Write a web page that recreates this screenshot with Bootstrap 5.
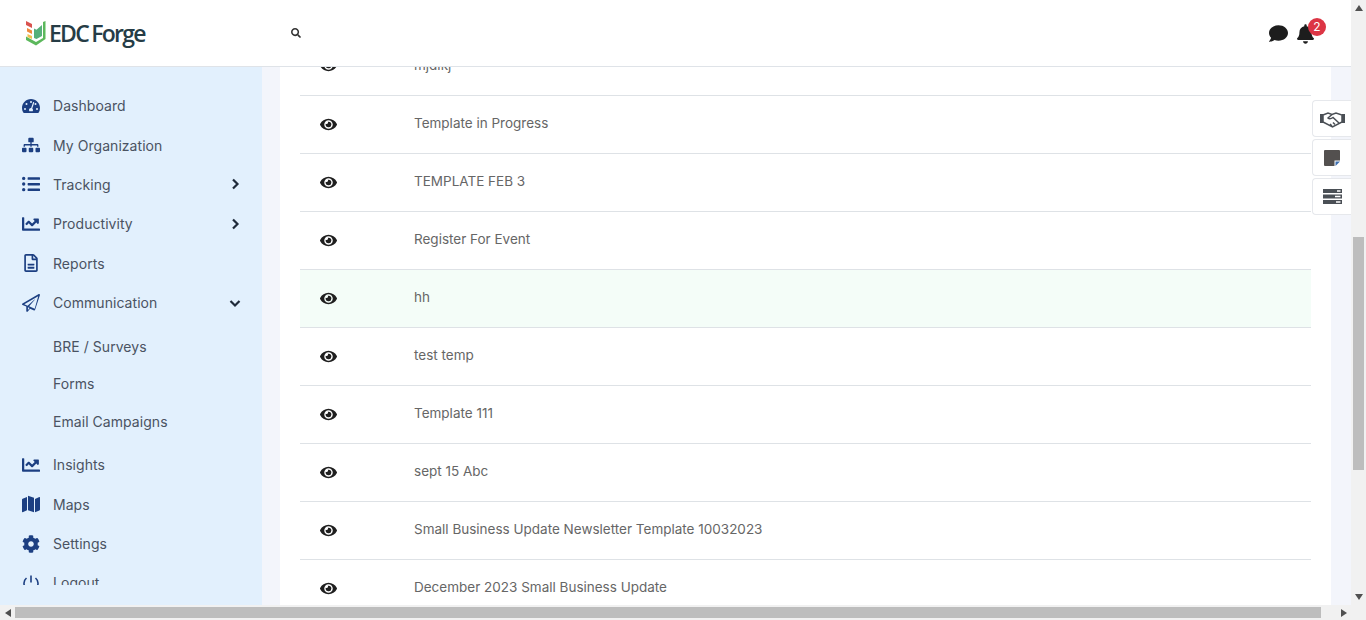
<!DOCTYPE html>
<html lang="en">
<head>
<meta charset="utf-8">
<title>EDC Forge</title>
<link href="https://cdn.jsdelivr.net/npm/bootstrap@5.3.0/dist/css/bootstrap.min.css" rel="stylesheet">
<style>
html,body{height:620px;overflow:hidden;}
body{font-family:Inter,"Open Sans","Liberation Sans",sans-serif;background:#f3f5fb;}
.frame{height:620px;width:1366px;}
.page-col{width:1351px;min-width:0;}
.topbar{height:67px;background:#fff;border-bottom:1px solid #dfe3e8;padding:0 37px 0 26px;flex:none;position:relative;z-index:2;}
.brand-mark{width:20px;height:26px;flex:none;}
.brand-word{font-family:"Open Sans","Liberation Sans",sans-serif;font-weight:600;font-size:23px;letter-spacing:-1.75px;color:#263c46;margin-left:3px;line-height:1;word-spacing:-1px;}
.search-ic{width:10px;height:10px;margin-left:146px;fill:#333;margin-top:-1px;}
.top-ic{fill:#1d1d1d;}
.bell-wrap{position:relative;width:17px;height:20px;margin-left:9px;margin-top:1px;}
.bell-count{position:absolute;left:11px;top:-6px;width:18px;height:18px;border-radius:50%;background:#dc3545;color:#fff;font-size:12px;line-height:18px;text-align:center;}
.workspace{flex:1;min-height:0;}
.side-panel{width:262px;background:#e2f0fd;flex:none;padding-top:19px;padding-bottom:20px;}
.side-list{height:499px;overflow:hidden;margin:0;padding:0;list-style:none;}
.side-item{height:39.4px;display:flex;align-items:center;padding-left:22px;padding-right:20px;color:#4a5362;font-size:14px;letter-spacing:.05px;}
.side-ic{width:18px;height:18px;fill:#1c3f82;margin-right:13px;flex:none;}
.side-chev{margin-left:auto;width:14px;height:14px;stroke:#1f2a3a;stroke-width:2.2;fill:none;}
.side-sub{list-style:none;margin:0;padding:5px 0 5px 0;}
.side-sub-item{height:37.6px;display:flex;align-items:center;padding-left:53px;color:#4a5362;font-size:14px;letter-spacing:.05px;}
.main-pad{flex:1;min-width:0;padding:0 20px 0 18px;overflow:hidden;}
.sheet{background:#fff;height:100%;padding:0 20px;overflow:hidden;}
.tmpl-table{margin-top:-30px;margin-bottom:0;width:100%;}
.tmpl-table td{height:58px;padding:0 0 2px;vertical-align:middle;color:#666;font-size:13.5px;border-bottom:1px solid #dee2e6;background:transparent;box-shadow:none;}
.tmpl-table tr.hl td{background:#f4fdf8;}
.eye-cell{width:114px;}
.eye-ic{width:17px;height:17px;fill:#1f1f1f;display:block;margin-left:20px;margin-top:2px;}
.float-stack{position:absolute;left:1312px;top:100px;width:39px;z-index:3;}
.float-btn{height:37px;margin-bottom:2px;background:#fff;border:1px solid #e6e8ec;border-right:0;border-radius:4px 0 0 4px;display:flex;align-items:center;justify-content:center;}
.hbar{height:15px;background:#f1f1f1;flex:none;}
.sb-arrow{width:15px;height:15px;flex:none;display:flex;align-items:center;justify-content:center;fill:#505050;}
.hthumb{width:1306px;height:11px;background:#bdbdbd;}
.vbar{width:15px;background:#f1f1f1;flex:none;height:620px;}
.vthumb{height:233px;width:11px;background:#bdbdbd;margin:222px auto 0;}
.v-spacer{flex:1;}
</style>
</head>
<body>
<div class="frame d-flex position-relative">
  <div class="page-col d-flex flex-column">
    <header class="topbar d-flex align-items-center">
      <svg class="brand-mark" viewBox="0 0 20 26"><path d="M0 1l6 3v4L0 5z" fill="#d9534f"/><path d="M1 8l5 2.400v3.600L1 11.500z" fill="#ee8a3c"/><path d="M1.500 14l4.500 2v3l-4.500-2z" fill="#f2c14e"/><path d="M0 16.500l10 5.500 7-4V2l2.500-1v18L10 25.500 0 20z" fill="#5cb85c"/><path d="M8 8.500l2.500 1.300V19L8 18z M10.500 9.800L16 5v11l-5.500 3z" fill="#56b07a"/></svg>
      <span class="brand-word">EDC Forge</span>
      <svg class="search-ic" viewBox="0 0 512 512"><path d="M505 442.700L405.300 343c-4.500-4.500-10.600-7-17-7H372c27.600-35.300 44-79.700 44-128C416 93.100 322.900 0 208 0S0 93.100 0 208s93.100 208 208 208c48.300 0 92.700-16.400 128-44v16.300c0 6.400 2.500 12.500 7 17l99.700 99.700c9.400 9.400 24.600 9.400 33.900 0l28.300-28.300c9.400-9.400 9.400-24.600.1-34zM208 336c-70.700 0-128-57.200-128-128 0-70.700 57.200-128 128-128 70.700 0 128 57.200 128 128 0 70.700-57.200 128-128 128z"/></svg>
      <div class="ms-auto d-flex align-items-center">
        <svg class="top-ic" width="19" height="19" viewBox="0 0 512 512"><path d="M256 32C114.600 32 0 125.100 0 240c0 49.600 21.400 95 57 130.700C44.500 421.100 2.700 466 2.200 466.500c-2.200 2.300-2.800 5.700-1.500 8.700S4.800 480 8 480c66.300 0 116-31.800 140.600-51.400 32.700 12.300 69 19.400 107.400 19.400 141.400 0 256-93.100 256-208S397.400 32 256 32z"/></svg>
        <div class="bell-wrap">
          <svg class="top-ic d-block" width="17" height="20" viewBox="0 0 448 512"><path d="M224 512c35.320 0 63.970-28.650 63.970-64H160.030c0 35.350 28.650 64 63.970 64zm215.390-149.710c-19.320-20.760-55.470-51.990-55.470-154.290 0-77.700-54.480-139.900-127.940-155.160V32c0-17.670-14.320-32-31.980-32s-31.980 14.330-31.980 32v20.840C118.560 68.100 64.080 130.300 64.080 208c0 102.300-36.150 133.530-55.470 154.290-6 6.450-8.660 14.160-8.610 21.710.11 16.400 12.980 32 32.100 32h383.800c19.120 0 32-15.600 32.100-32 .05-7.550-2.610-15.270-8.610-21.710z"/></svg>
          <span class="bell-count">2</span>
        </div>
      </div>
    </header>
    <div class="workspace d-flex">
      <nav class="side-panel">
        <ul class="side-list">
          <li class="side-item"><svg class="side-ic" viewBox="0 0 576 512"><path d="M288 32C129 32 0 161 0 320c0 53 14 102 39 145 5 9 15 15 26 15h446c11 0 21-6 26-15 25-43 39-92 39-145C576 161 447 32 288 32zm0 64a32 32 0 1 1 0 64 32 32 0 0 1 0-64zM96 384a32 32 0 1 1 0-64 32 32 0 0 1 0 64zm48-160a32 32 0 1 1 0-64 32 32 0 0 1 0 64zm246-74l-62 186c14 12 24 30 24 50 0 13-4 25-11 34H235c-7-9-11-21-11-34 0-35 29-64 64-64h4l62-186c3-8 12-13 20-10 9 3 13 12 10 20l6-2zm42 74a32 32 0 1 1 0-64 32 32 0 0 1 0 64zm48 160a32 32 0 1 1 0-64 32 32 0 0 1 0 64z"/></svg>Dashboard</li>
          <li class="side-item"><svg class="side-ic" viewBox="0 0 640 512"><path d="M128 352H32c-18 0-32 14-32 32v96c0 18 14 32 32 32h96c18 0 32-14 32-32v-96c0-18-14-32-32-32zm-24-80h192v48h48v-48h192v48h48v-57c0-21-17-39-39-39H344v-64h40c18 0 32-14 32-32V32c0-18-14-32-32-32H256c-18 0-32 14-32 32v96c0 18 14 32 32 32h40v64H95c-21 0-39 18-39 39v57h48v-48zm264 80h-96c-18 0-32 14-32 32v96c0 18 14 32 32 32h96c18 0 32-14 32-32v-96c0-18-14-32-32-32zm240 0h-96c-18 0-32 14-32 32v96c0 18 14 32 32 32h96c18 0 32-14 32-32v-96c0-18-14-32-32-32z"/></svg>My Organization</li>
          <li class="side-item"><svg class="side-ic" viewBox="0 0 512 512"><path d="M48 48a48 48 0 1 0 0 96 48 48 0 0 0 0-96zm0 160a48 48 0 1 0 0 96 48 48 0 0 0 0-96zm0 160a48 48 0 1 0 0 96 48 48 0 0 0 0-96zM496 384H176c-9 0-16 7-16 16v40c0 9 7 16 16 16h320c9 0 16-7 16-16v-40c0-9-7-16-16-16zm0-320H176c-9 0-16 7-16 16v40c0 9 7 16 16 16h320c9 0 16-7 16-16V80c0-9-7-16-16-16zm0 160H176c-9 0-16 7-16 16v40c0 9 7 16 16 16h320c9 0 16-7 16-16v-40c0-9-7-16-16-16z"/></svg>Tracking<svg class="side-chev" viewBox="0 0 14 14"><path d="M5 2.500l4.500 4.500L5 11.500"/></svg></li>
          <li class="side-item"><svg class="side-ic" viewBox="0 0 512 512"><path d="M496 384H64V80c0-9-7-16-16-16H16C7 64 0 71 0 80v336c0 18 14 32 32 32h464c9 0 16-7 16-16v-32c0-9-7-16-16-16zM464 96H346c-21 0-32 26-17 41l32 32-74 74-73-73c-13-13-33-13-46 0l-68 69c-6 6-6 16 0 22l23 23c6 6 16 6 22 0l46-46 73 74c13 13 33 13 46 0l97-97 32 32c15 15 41 4 41-17V112c0-9-7-16-16-16z"/></svg>Productivity<svg class="side-chev" viewBox="0 0 14 14"><path d="M5 2.500l4.500 4.500L5 11.500"/></svg></li>
          <li class="side-item"><svg class="side-ic" viewBox="0 0 384 512"><path d="M369 98L286 15C276 5 264 0 251 0H48C22 0 0 22 0 48v416c0 26 22 48 48 48h288c26 0 48-22 48-48V132c0-13-5-25-15-34zm-38 30h-75V53l75 75zM48 464V48h160v104c0 13 11 24 24 24h104v288H48zm240-176v28c0 7-5 12-12 12H108c-7 0-12-5-12-12v-28c0-7 5-12 12-12h168c7 0 12 5 12 12zm0 88v28c0 7-5 12-12 12H108c-7 0-12-5-12-12v-28c0-7 5-12 12-12h168c7 0 12 5 12 12z"/></svg>Reports</li>
          <li class="side-item"><svg class="side-ic" viewBox="0 0 512 512"><path d="M476 3L13 270c-18 10-16 35 2 43l106 44v124c0 24 31 34 45 15l63-77 114 48c13 5 28-3 30-17L511 28c3-19-18-34-35-25zM169 457v-80l49 20-49 60zm192-40l-157-66 160-188c4-5-2-11-7-7L158 334l-93-39L461 66l-100 351z"/></svg>Communication<svg class="side-chev" viewBox="0 0 14 14"><path d="M2.500 5L7 9.500 11.500 5"/></svg></li>
          <li>
            <ul class="side-sub">
              <li class="side-sub-item">BRE / Surveys</li>
              <li class="side-sub-item">Forms</li>
              <li class="side-sub-item">Email Campaigns</li>
            </ul>
          </li>
          <li class="side-item"><svg class="side-ic" viewBox="0 0 512 512"><path d="M496 384H64V80c0-9-7-16-16-16H16C7 64 0 71 0 80v336c0 18 14 32 32 32h464c9 0 16-7 16-16v-32c0-9-7-16-16-16zM464 96H346c-21 0-32 26-17 41l32 32-74 74-73-73c-13-13-33-13-46 0l-68 69c-6 6-6 16 0 22l23 23c6 6 16 6 22 0l46-46 73 74c13 13 33 13 46 0l97-97 32 32c15 15 41 4 41-17V112c0-9-7-16-16-16z"/></svg>Insights</li>
          <li class="side-item"><svg class="side-ic" viewBox="0 0 576 512"><path d="M0 117v387c0 11 11 19 22 15l138-63V32L20 88C8 93 0 104 0 117zm192 339l192 64V56L192-8v464zM554 33L416 96v424l140-56c12-5 20-16 20-29V48c0-11-11-19-22-15z"/></svg>Maps</li>
          <li class="side-item"><svg class="side-ic" viewBox="0 0 512 512"><path d="M487.400 315.700l-42.600-24.600c4.300-23.200 4.300-47 0-70.200l42.600-24.600c4.900-2.800 7.100-8.600 5.500-14-11.100-35.600-30-67.800-54.700-94.600-3.800-4.100-10-5.100-14.800-2.300L380.800 110c-17.900-15.400-38.500-27.300-60.800-35.100V25.800c0-5.600-3.900-10.500-9.400-11.700-36.700-8.200-74.300-7.800-109.200 0-5.500 1.200-9.400 6.100-9.400 11.700V75c-22.200 7.900-42.800 19.800-60.800 35.100L88.700 85.500c-4.900-2.800-11-1.900-14.800 2.300-24.700 26.700-43.600 58.900-54.700 94.600-1.700 5.400.6 11.200 5.500 14L67.300 221c-4.300 23.200-4.300 47 0 70.200l-42.600 24.600c-4.900 2.800-7.100 8.600-5.500 14 11.100 35.600 30 67.800 54.700 94.600 3.800 4.100 10 5.100 14.800 2.300l42.600-24.600c17.900 15.400 38.500 27.300 60.800 35.100v49.200c0 5.600 3.900 10.500 9.400 11.700 36.700 8.200 74.300 7.800 109.200 0 5.500-1.200 9.400-6.100 9.400-11.700v-49.200c22.200-7.900 42.800-19.800 60.800-35.100l42.600 24.600c4.900 2.800 11 1.900 14.800-2.300 24.700-26.700 43.600-58.900 54.700-94.600 1.500-5.500-.7-11.300-5.600-14.100zM256 336c-44.100 0-80-35.900-80-80s35.900-80 80-80 80 35.900 80 80-35.900 80-80 80z"/></svg>Settings</li>
          <li class="side-item"><svg class="side-ic" viewBox="0 0 18 18"><path d="M9 1.500v7M4.500 4A7 7 0 1 0 13.500 4" fill="none" stroke="#1c3f82" stroke-width="1.600"/></svg>Logout</li>
        </ul>
      </nav>
      <main class="main-pad">
        <div class="sheet">
          <table class="table tmpl-table">
            <tbody>
              <tr><td class="eye-cell"><svg class="eye-ic" viewBox="0 0 576 512"><use href="#eye"/></svg></td><td>mjdikj</td></tr>
              <tr><td class="eye-cell"><svg class="eye-ic" viewBox="0 0 576 512"><use href="#eye"/></svg></td><td>Template in Progress</td></tr>
              <tr><td class="eye-cell"><svg class="eye-ic" viewBox="0 0 576 512"><use href="#eye"/></svg></td><td>TEMPLATE FEB 3</td></tr>
              <tr><td class="eye-cell"><svg class="eye-ic" viewBox="0 0 576 512"><use href="#eye"/></svg></td><td>Register For Event</td></tr>
              <tr class="hl"><td class="eye-cell"><svg class="eye-ic" viewBox="0 0 576 512"><use href="#eye"/></svg></td><td>hh</td></tr>
              <tr><td class="eye-cell"><svg class="eye-ic" viewBox="0 0 576 512"><use href="#eye"/></svg></td><td>test temp</td></tr>
              <tr><td class="eye-cell"><svg class="eye-ic" viewBox="0 0 576 512"><use href="#eye"/></svg></td><td>Template 111</td></tr>
              <tr><td class="eye-cell"><svg class="eye-ic" viewBox="0 0 576 512"><use href="#eye"/></svg></td><td>sept 15 Abc</td></tr>
              <tr><td class="eye-cell"><svg class="eye-ic" viewBox="0 0 576 512"><use href="#eye"/></svg></td><td>Small Business Update Newsletter Template 10032023</td></tr>
              <tr><td class="eye-cell"><svg class="eye-ic" viewBox="0 0 576 512"><use href="#eye"/></svg></td><td>December 2023 Small Business Update</td></tr>
            </tbody>
          </table>
        </div>
      </main>
    </div>
    <div class="hbar d-flex align-items-center">
      <div class="sb-arrow"><svg width="6" height="8" viewBox="0 0 6 8"><path d="M6 0v8L0 4z"/></svg></div>
      <div class="hthumb"></div>
      <div class="ms-auto sb-arrow"><svg width="6" height="8" viewBox="0 0 6 8"><path d="M0 0v8l6-4z"/></svg></div>
    </div>
  </div>
  <div class="vbar d-flex flex-column">
    <div class="sb-arrow"><svg width="8" height="6" viewBox="0 0 8 6"><path d="M0 6h8L4 0z"/></svg></div>
    <div class="vthumb"></div>
    <div class="v-spacer"></div>
    <div class="sb-arrow mb-3"><svg width="8" height="6" viewBox="0 0 8 6"><path d="M0 0h8L4 6z"/></svg></div>
  </div>
  <div class="float-stack">
    <div class="float-btn"><svg width="25" height="18" viewBox="0 0 25 18" fill="none" stroke="#4a4f55" stroke-width="1.500"><path d="M3 5l5-2 4 1.500 4-1.500 6 2v7l-9.500 5L3 12z" /><path d="M12 4.500L8 8c1.500 1.500 3 1 5-.5l6 5.500M10 14l2 2M13 12.500l2 2"/><path d="M0 4h3v9H0zM22 4h3v9h-3z" fill="#4a4f55" stroke="none"/></svg></div>
    <div class="float-btn"><svg width="16" height="16" viewBox="0 0 16 16"><path d="M1 0h14a1 1 0 0 1 1 1v9.500h-5.500V16H1a1 1 0 0 1-1-1V1a1 1 0 0 1 1-1z" fill="#53504f"/><path d="M11.500 11.500H16L11.500 16z" fill="#3d6fb0"/></svg></div>
    <div class="float-btn"><svg width="19" height="15" viewBox="0 0 19 15" fill="#4a4f55"><path d="M0 0h19v4H0zM0 5.500h19v4H0zM0 11h19v4H0z"/><path d="M14 1.200h3.500v1.600H14zM12 6.700h5.500v1.600H12zM13 12.200h4.500v1.600H13z" fill="#fff"/></svg></div>
  </div>
</div>
<svg width="0" height="0" class="d-block position-absolute"><defs><symbol id="eye" viewBox="0 0 576 512"><path d="M572.520 241.400C518.290 135.590 410.930 64 288 64S57.680 135.640 3.480 241.410a32.350 32.350 0 0 0 0 29.190C57.710 376.410 165.070 448 288 448s230.320-71.640 284.520-177.410a32.350 32.350 0 0 0 0-29.190zM288 400a144 144 0 1 1 144-144 143.930 143.930 0 0 1-144 144zm0-240a95.310 95.310 0 0 0-25.310 3.790 47.850 47.850 0 0 1-66.900 66.900A95.780 95.780 0 1 0 288 160z"/></symbol></defs></svg>
</body>
</html>
